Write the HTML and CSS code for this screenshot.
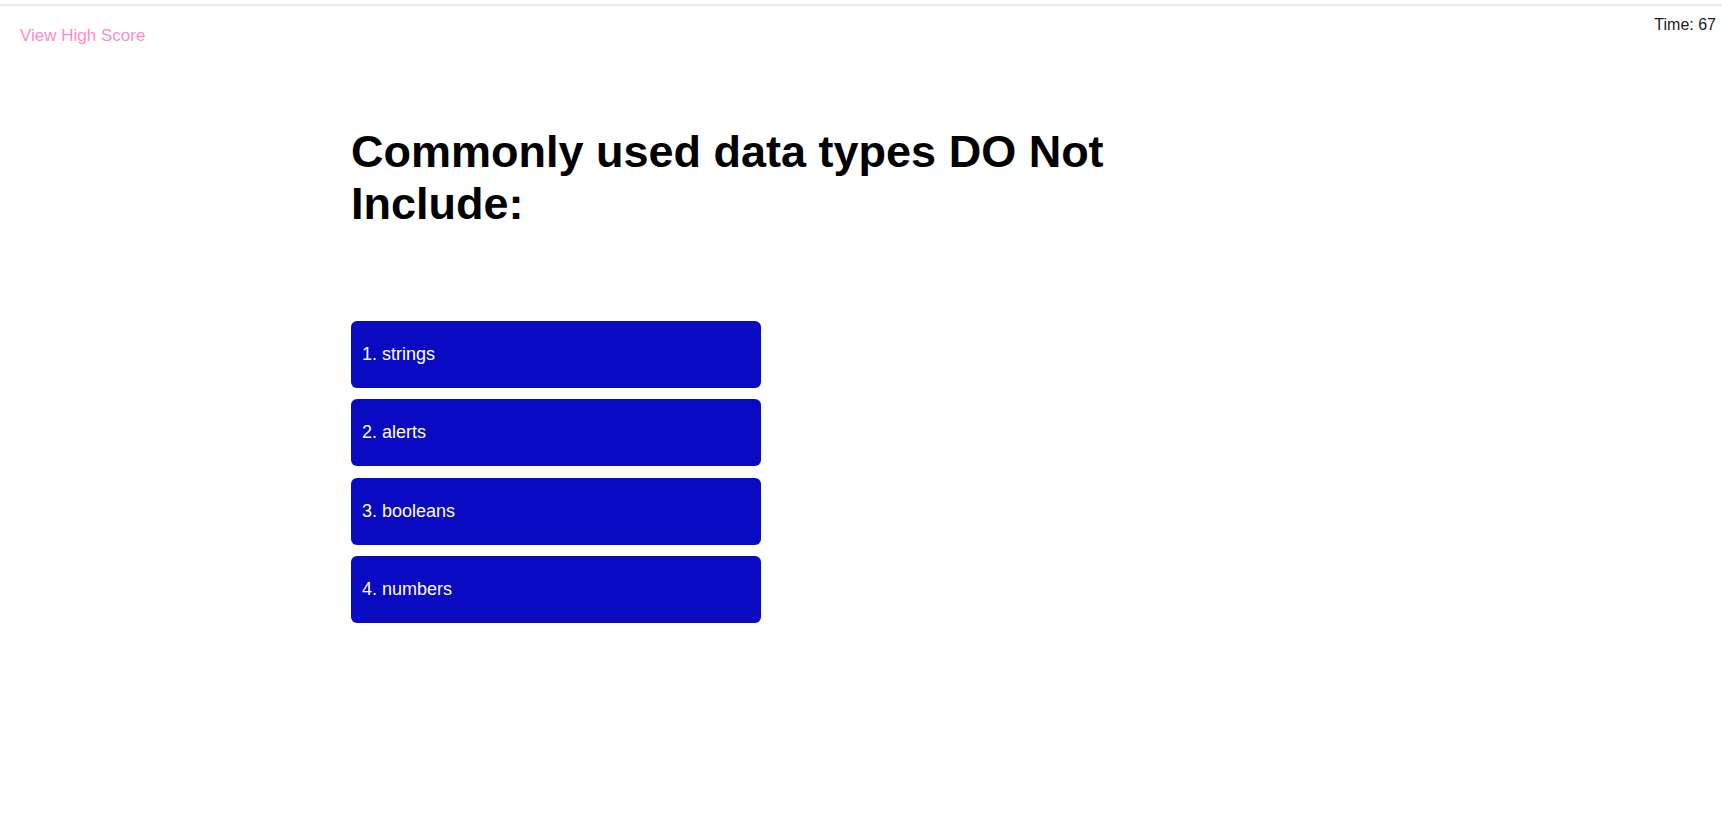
FILE: index.html
```html
<!DOCTYPE html>
<html lang="en">
<head>
<meta charset="utf-8">
<title>Code Quiz</title>
<link rel="stylesheet" href="styles.css">
</head>
<body>
<div class="topline"></div>
<header class="header">
  <a class="highscore" href="#">View High Score</a>
  <div class="timer">Time: 67</div>
</header>
<main class="main">
  <h1 class="question">Commonly used data types DO Not Include:</h1>
  <div class="answers">
    <button class="answer">1. strings</button>
    <button class="answer">2. alerts</button>
    <button class="answer">3. booleans</button>
    <button class="answer">4. numbers</button>
  </div>
</main>
</body>
</html>
```

FILE: styles.css
```css
html, body {
  margin: 0;
  padding: 0;
  background: #ffffff;
  font-family: "Liberation Sans", Arial, sans-serif;
}

.topline {
  height: 2px;
  margin-top: 4px;
  background: #ececec;
}

.header {
  display: flex;
  justify-content: space-between;
  align-items: flex-start;
  height: 40px;
}

.highscore {
  margin-top: 20px;
  margin-left: 20px;
  font-size: 17px;
  color: #ff8ac6;
  text-decoration: none;
}

.timer {
  margin-top: 10px;
  margin-right: 6px;
  font-size: 16px;
  color: #1a1a1a;
}

.main {
  width: 1020px;
  margin: 0 auto;
}

.question {
  max-width: 800px;
  margin: 80px 0 0 0;
  font-size: 45px;
  font-weight: bold;
  color: #000000;
}

.answers {
  display: flex;
  flex-direction: column;
  gap: 11.4px;
  margin-top: 91px;
}

.answer {
  width: 410px;
  height: 67px;
  padding: 0 0 0 11px;
  border: none;
  border-radius: 6px;
  background: #0a0ac3;
  color: #ffffff;
  font-family: "Liberation Sans", Arial, sans-serif;
  font-size: 18px;
  text-align: left;
  cursor: pointer;
}
```
